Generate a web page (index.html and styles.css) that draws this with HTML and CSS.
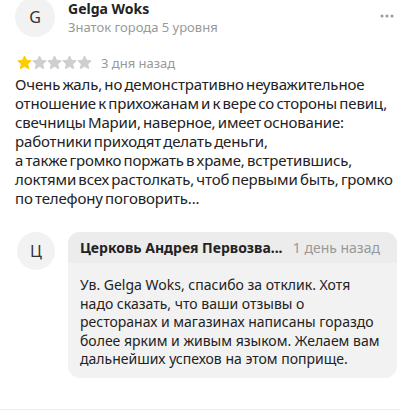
FILE: index.html
```html
<!DOCTYPE html>
<html lang="ru">
<head>
    <meta charset="UTF-8">
    <meta name="viewport" content="width=device-width, initial-scale=1.0">
    <title>Отзыв</title>
    <link rel="stylesheet" href="styles.css">
</head>
<body>

    <div class="review">
        <div class="author">
            <div class="avatar">G</div>
            <div class="author-info">
                <div class="name">Gelga Woks</div>
                <div class="status">Знаток города 5 уровня</div>
            </div>
            <svg class="more" width="14" height="4" viewBox="0 0 14 4">
                <circle cx="2" cy="2" r="1.5" fill="#999"/>
                <circle cx="7" cy="2" r="1.5" fill="#999"/>
                <circle cx="12" cy="2" r="1.5" fill="#999"/>
            </svg>
        </div>

        <div class="rating">
            <svg class="star on" width="15" height="15" viewBox="0 0 24 24"><path d="M12 1.5l3.2 6.9 7.5.9-5.6 5.1 1.5 7.4L12 18.1l-6.6 3.7 1.5-7.4-5.6-5.1 7.5-.9z"/></svg>
            <svg class="star" width="15" height="15" viewBox="0 0 24 24"><path d="M12 1.5l3.2 6.9 7.5.9-5.6 5.1 1.5 7.4L12 18.1l-6.6 3.7 1.5-7.4-5.6-5.1 7.5-.9z"/></svg>
            <svg class="star" width="15" height="15" viewBox="0 0 24 24"><path d="M12 1.5l3.2 6.9 7.5.9-5.6 5.1 1.5 7.4L12 18.1l-6.6 3.7 1.5-7.4-5.6-5.1 7.5-.9z"/></svg>
            <svg class="star" width="15" height="15" viewBox="0 0 24 24"><path d="M12 1.5l3.2 6.9 7.5.9-5.6 5.1 1.5 7.4L12 18.1l-6.6 3.7 1.5-7.4-5.6-5.1 7.5-.9z"/></svg>
            <svg class="star" width="15" height="15" viewBox="0 0 24 24"><path d="M12 1.5l3.2 6.9 7.5.9-5.6 5.1 1.5 7.4L12 18.1l-6.6 3.7 1.5-7.4-5.6-5.1 7.5-.9z"/></svg>
            <span class="date">3 дня назад</span>
        </div>

        <p class="text">Очень жаль, но демонстративно неуважительное отношение к прихожанам и к вере со стороны певиц, свечницы Марии, наверное, имеет основание:<br>работники приходят делать деньги,<br>а также громко поржать в храме, встретившись, локтями всех растолкать, чтоб первыми быть, громко по телефону поговорить...</p>
    </div>

    <div class="reply">
        <div class="avatar small">Ц</div>
        <div class="bubble">
            <div class="bubble-head">
                <span class="org">Церковь Андрея Первозва...</span>
                <span class="date">1 день назад</span>
            </div>
            <p class="bubble-text">Ув. Gelga Woks, спасибо за отклик. Хотя надо сказать, что ваши отзывы о ресторанах и магазинах написаны гораздо более ярким и живым языком. Желаем вам дальнейших успехов на этом поприще.</p>
        </div>
    </div>

    <div class="divider"></div>

</body>
</html>
```

FILE: styles.css
```css
body {
    margin: 0;
    width: 400px;
    font-family: "Noto Sans", "Open Sans", sans-serif;
    color: #222;
    background: #fff;
}
.review {
    padding: 0 4px 0 15px;
}
.author {
    display: flex;
    align-items: center;
    gap: 13px;
    margin-top: -3px;
}
.avatar {
    width: 40px;
    height: 40px;
    border-radius: 50%;
    background: #f2f2f2;
    display: flex;
    align-items: center;
    justify-content: center;
    font-size: 16px;
    color: #333;
    flex-shrink: 0;
}
.avatar.small {
    width: 38px;
    height: 38px;
}
.author-info {
    flex: 1;
}
.name {
    font-weight: 700;
    font-size: 14px;
    line-height: 18px;
    margin-top: 1px;
}
.status {
    font-size: 13px;
    line-height: 18px;
    color: #999;
}
.more {
    margin: 0 2px 2px 0;
}
.rating {
    display: flex;
    align-items: center;
    margin-top: 18px;
    height: 15px;
}
.star {
    display: block;
    flex-shrink: 0;
    fill: #cfcfcf;
    stroke: #cfcfcf;
    stroke-width: 1.6;
    stroke-linejoin: round;
}
.star:first-child {
    margin-left: 2px;
}
.star.on {
    fill: #fc0;
    stroke: #fc0;
}
.date {
    font-size: 13px;
    color: #999;
    margin-left: 9px;
}
.text {
    margin: 5px 0 0;
    font-size: 15px;
    line-height: 19px;
    letter-spacing: -0.15px;
    word-spacing: -1.5px;
}
.reply {
    display: flex;
    align-items: flex-start;
    gap: 13px;
    margin-top: 24px;
    padding: 0 3px 0 17px;
}
.bubble {
    flex: 1;
    background: #f2f2f2;
    border-radius: 12px;
    overflow: hidden;
}
.bubble-head {
    display: flex;
    justify-content: space-between;
    align-items: center;
    height: 31px;
    padding: 0 17px 0 12px;
    background: #ececec;
}
.org {
    font-weight: 700;
    font-size: 14px;
}
.bubble-head .date {
    margin-left: 0;
    font-size: 14px;
}
.bubble-text {
    margin: 0;
    padding: 13px 12px 9px;
    font-size: 14px;
    line-height: 18.6px;
}
.divider {
    height: 1px;
    background: #ededed;
    margin-top: 31px;
}
```
